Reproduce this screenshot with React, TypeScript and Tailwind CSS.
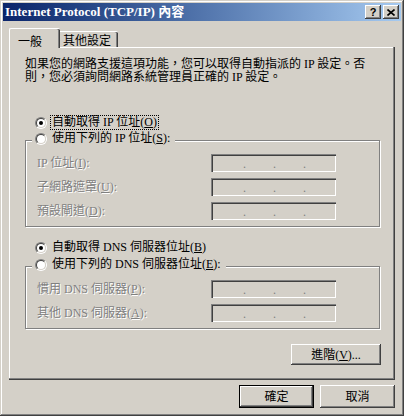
import React from "react";

const font = "font-['Liberation_Serif','Noto_Sans_CJK_TC',serif]";

function Radio({ checked }: { checked?: boolean }) {
  return (
    <span className="flex w-[12px] h-[12px] shrink-0 rounded-full border border-t-[#808080] border-l-[#808080] border-b-white border-r-white">
      <span className="flex flex-1 items-center justify-center rounded-full border border-t-[#404040] border-l-[#404040] border-b-[#d4d0c8] border-r-[#d4d0c8] bg-white">
        {checked && <span className="w-[4px] h-[4px] rounded-full bg-black" />}
      </span>
    </span>
  );
}

function RadioRow({ checked, focus, children }: { checked?: boolean; focus?: boolean; children: React.ReactNode }) {
  return (
    <div className="flex items-center h-[13px]">
      <Radio checked={checked} />
      <span
        className={`ml-[3px] px-[1px] leading-[13px] border ${
          focus ? "border-dotted border-black" : "border-transparent"
        }`}
      >
        {children}
      </span>
    </div>
  );
}

function IpBox() {
  return (
    <div className="w-[125px] h-[18px] flex items-end pl-[32px] pb-[3px] bg-[#d4d0c8] text-[#808080] leading-[10px] shadow-[inset_1px_1px_0_#808080,inset_2px_2px_0_#404040,inset_-1px_-1px_0_#fff,inset_-2px_-2px_0_#d4d0c8]">
      <span className="w-[30px]">.</span>
      <span className="w-[30px]">.</span>
      <span className="w-[30px]">.</span>
    </div>
  );
}

function Field({ label, k, rest }: { label: string; k: string; rest: string }) {
  return (
    <div className="flex items-center h-[18px]">
      <span className="w-[174px] text-[#808080] [text-shadow:1px_1px_0_#fff]">
        {label}(<span className="underline">{k}</span>){rest}
      </span>
      <IpBox />
    </div>
  );
}

function Group({ legend, children }: { legend: React.ReactNode; children: React.ReactNode }) {
  return (
    <fieldset className="border border-[#808080] shadow-[1px_1px_0_#fff,inset_1px_1px_0_#fff] pl-[11px] pt-[6px] pb-[6px] w-[355px]">
      <legend className="-ml-[5px] px-[3px] bg-[#d4d0c8]">
        <div className="pb-[3px]">{legend}</div>
      </legend>
      <div className="flex flex-col gap-[6px]">{children}</div>
    </fieldset>
  );
}

function Button({ children, isDefault, w }: { children: React.ReactNode; isDefault?: boolean; w: string }) {
  return (
    <button
      className={`${w} flex items-center justify-center bg-[#d4d0c8] ${
        isDefault
          ? "h-[23px] border border-black shadow-[inset_-1px_-1px_0_#404040,inset_1px_1px_0_#fff,inset_-2px_-2px_0_#808080]"
          : "shadow-[inset_-1px_-1px_0_#404040,inset_1px_1px_0_#fff,inset_-2px_-2px_0_#808080,inset_2px_2px_0_#d4d0c8]"
      }`}
    >
      {children}
    </button>
  );
}

export default function App() {
  return (
    <div
      className={`w-[404px] h-[416px] flex flex-col p-[3px] bg-[#d4d0c8] text-[12px] text-black ${font} shadow-[inset_-1px_-1px_0_#404040,inset_1px_1px_0_#d4d0c8,inset_-2px_-2px_0_#808080,inset_2px_2px_0_#fff]`}
    >
      {/* title bar */}
      <div className="h-[18px] flex items-center pl-[2px] pr-[2px] bg-linear-to-r from-[#0a246a] to-[#a6caf0]">
        <span className="text-white font-bold text-[13px] leading-[14px]">Internet Protocol (TCP/IP) 內容</span>
        <div className="ml-auto flex gap-[2px]">
          <div className="w-[16px] h-[14px] flex items-center justify-center bg-[#d4d0c8] shadow-[inset_-1px_-1px_0_#404040,inset_1px_1px_0_#fff,inset_-2px_-2px_0_#808080]">
            <span className="font-['Liberation_Sans',sans-serif] font-bold text-[11px] leading-[11px]">?</span>
          </div>
          <div className="w-[16px] h-[14px] flex items-center justify-center bg-[#d4d0c8] shadow-[inset_-1px_-1px_0_#404040,inset_1px_1px_0_#fff,inset_-2px_-2px_0_#808080]">
            <svg width="8" height="7" viewBox="0 0 8 7">
              <path d="M0.5 0.5 L7.5 6.5 M7.5 0.5 L0.5 6.5" stroke="black" strokeWidth="1.6" />
            </svg>
          </div>
        </div>
      </div>

      <div className="flex flex-col px-[6px] pt-[7px]">
        {/* tabs */}
        <div className="flex items-end">
          <div className="relative z-10 -mb-px w-[51px] h-[20px] pl-[8px] pt-[4px] bg-[#d4d0c8] rounded-t-[2px] border-l border-t border-white shadow-[inset_-1px_0_0_#404040,inset_-2px_0_0_#808080]">
            一般
          </div>
          <div className="w-[58px] h-[16px] pl-[3px] pt-[2px] bg-[#d4d0c8] rounded-tr-[2px] border-t border-white shadow-[inset_-1px_0_0_#404040,inset_-2px_0_0_#808080] leading-[14px]">
            其他設定
          </div>
        </div>

        {/* panel */}
        <div className="h-[333px] flex flex-col pl-[16px] pr-[15px] pt-[11px] shadow-[inset_-1px_-1px_0_#404040,inset_-2px_-2px_0_#808080,inset_1px_1px_0_#fff]">
          <p className="leading-[13px]">
            如果您的網路支援這項功能，您可以取得自動指派的 IP 設定。否
            <br />
            則，您必須詢問網路系統管理員正確的 IP 設定。
          </p>

          <div className="mt-[32px] pl-[10px]">
            <RadioRow checked focus>
              自動取得 IP 位址(<span className="underline">O</span>)
            </RadioRow>
          </div>
          <div className="mt-[3px]">
            <Group
              legend={
                <RadioRow>
                  使用下列的 IP 位址(<span className="underline">S</span>):
                </RadioRow>
              }
            >
              <Field label="IP 位址" k="I" rest=":" />
              <Field label="子網路遮罩" k="U" rest=":" />
              <Field label="預設閘道" k="D" rest=":" />
            </Group>
          </div>

          <div className="mt-[14px] pl-[10px]">
            <RadioRow checked>
              自動取得 DNS 伺服器位址(<span className="underline">B</span>)
            </RadioRow>
          </div>
          <div className="mt-[4px]">
            <Group
              legend={
                <RadioRow>
                  使用下列的 DNS 伺服器位址(<span className="underline">E</span>):
                </RadioRow>
              }
            >
              <Field label="慣用 DNS 伺服器" k="P" rest=":" />
              <Field label="其他 DNS 伺服器" k="A" rest=":" />
            </Group>
          </div>

          <div className="mt-[15px] flex justify-end -mr-px">
            <div className="h-[21px] flex">
              <Button w="w-[90px]">
                進階(<span className="underline">V</span>)...
              </Button>
            </div>
          </div>
        </div>

        {/* dialog buttons */}
        <div className="mt-[5px] flex justify-end gap-[6px] h-[23px]">
          <Button w="w-[75px]" isDefault>
            確定
          </Button>
          <Button w="w-[75px]">取消</Button>
        </div>
      </div>
    </div>
  );
}
